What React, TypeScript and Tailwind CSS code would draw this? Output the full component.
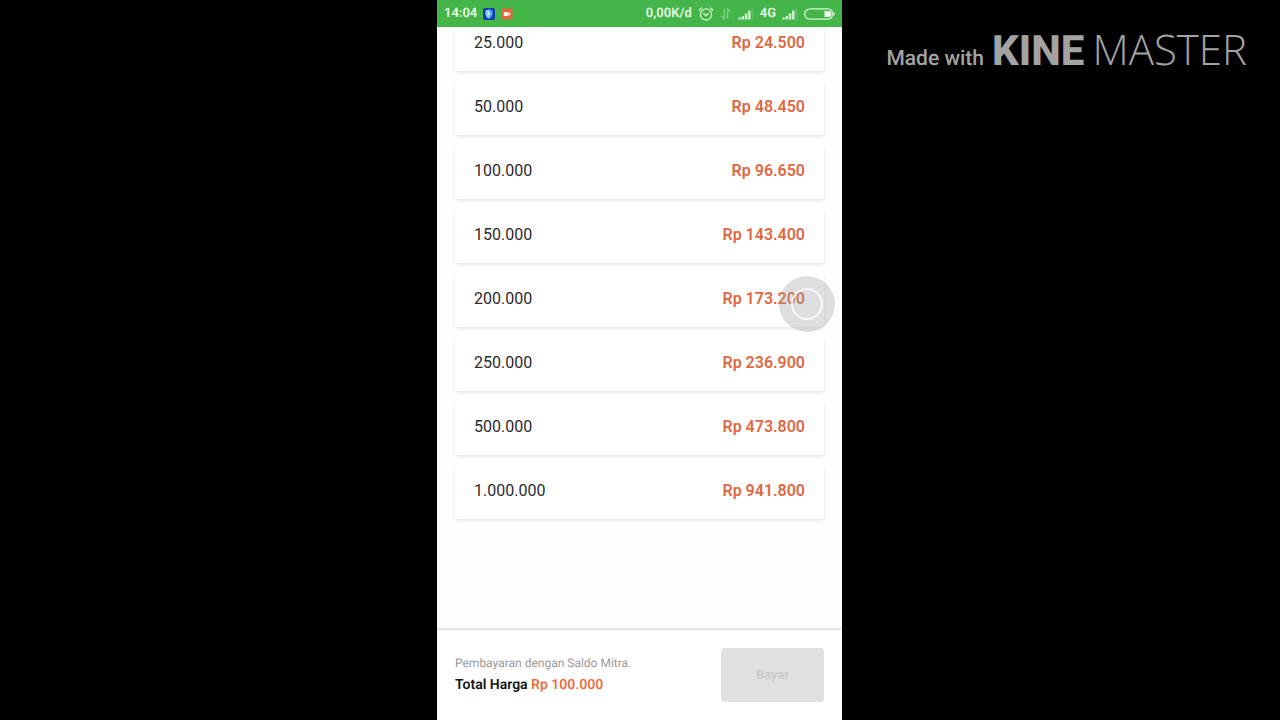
interface Voucher {
  nominal: string
  price: string
}

const vouchers: Voucher[] = [
  { nominal: '25.000', price: 'Rp 24.500' },
  { nominal: '50.000', price: 'Rp 48.450' },
  { nominal: '100.000', price: 'Rp 96.650' },
  { nominal: '150.000', price: 'Rp 143.400' },
  { nominal: '200.000', price: 'Rp 173.200' },
  { nominal: '250.000', price: 'Rp 236.900' },
  { nominal: '500.000', price: 'Rp 473.800' },
  { nominal: '1.000.000', price: 'Rp 941.800' },
]

function ShieldIcon() {
  return (
    <svg width="12" height="12" viewBox="0 0 12 12" aria-hidden="true">
      <rect width="12" height="12" rx="2" fill="#123fae" />
      <path d="M6 1.6 9.4 2.7v2.8c0 2.4-1.4 4-3.4 5-2-1-3.4-2.6-3.4-5V2.7z" fill="#5aa9f5" />
      <path d="M6 1.6v8.9c-2-1-3.4-2.6-3.4-5V2.7z" fill="#8fd0ff" />
      <path d="M6 3.8 7.3 5.4 6 7.4 4.7 5.4z" fill="#e6f6ff" />
    </svg>
  )
}

function RecorderIcon() {
  return (
    <svg width="12" height="12" viewBox="0 0 12 12" aria-hidden="true">
      <rect x="0.5" y="0.5" width="11" height="11" rx="1.5" fill="#e0673c" />
      <rect x="2.8" y="4" width="4.4" height="4" rx="0.6" fill="#fff" />
      <path d="M7.4 5.6 9.2 4.3v3.4L7.4 6.4z" fill="#fff" />
    </svg>
  )
}

function AlarmIcon() {
  return (
    <svg width="16" height="14" viewBox="0 0 16 14" fill="none" stroke="#d3f3d2" strokeWidth="1.3" strokeLinecap="round" aria-hidden="true">
      <circle cx="8" cy="7.4" r="5.6" />
      <path d="M5.6 6.6 8 8.6l2.4-2M1.2 3 3.6 1M14.8 3 12.4 1" />
    </svg>
  )
}

function DataArrowsIcon() {
  return (
    <svg width="12" height="12" viewBox="0 0 12 12" fill="none" stroke="#82d084" strokeWidth="1.4" aria-hidden="true">
      <path d="M4.4 1v10L1.4 8M7.6 11V1l3 3" />
    </svg>
  )
}

function SignalIcon() {
  return (
    <svg width="16" height="12" viewBox="0 0 16 12" fill="#d3f3d2" aria-hidden="true">
      <rect x="0.5" y="9.5" width="2.4" height="2" />
      <rect x="3.7" y="8" width="2.4" height="3.5" />
      <rect x="6.9" y="5.5" width="2.4" height="6" />
      <rect x="10.1" y="2.5" width="2.4" height="9" />
      <rect x="13.3" y="1" width="2" height="10.5" fill="#5cbe5f" />
    </svg>
  )
}

function BatteryIcon() {
  return (
    <svg width="31" height="12" viewBox="0 0 31 12" aria-hidden="true">
      <rect x="0.8" y="0.8" width="28" height="10.4" rx="5.2" fill="none" stroke="#d3f3d2" strokeWidth="1.3" />
      <path d="M20.5 3h4a3 3 0 0 1 3 3 3 3 0 0 1-3 3h-4z" fill="#eefbee" />
      <path d="M30.2 4.4v3.2" stroke="#d3f3d2" strokeWidth="1.2" />
    </svg>
  )
}

function StatusBar() {
  return (
    <header className="flex h-[27px] shrink-0 items-center justify-between bg-[#44b649] px-[7px] pt-px text-[13px] leading-4 font-semibold text-[#e6fae5]">
      <div className="flex items-center gap-[6px]">
        <span>14:04</span>
        <ShieldIcon />
        <RecorderIcon />
      </div>
      <div className="flex items-center gap-[6px]">
        <span>0,00K/d</span>
        <AlarmIcon />
        <DataArrowsIcon />
        <SignalIcon />
        <span>4G</span>
        <SignalIcon />
        <BatteryIcon />
      </div>
    </header>
  )
}

function VoucherCard({ nominal, price }: Voucher) {
  return (
    <li>
      <button
        type="button"
        className="flex h-14 w-full items-center justify-between rounded bg-white px-[19px] text-base text-[#2b2b2b] shadow-[0_2px_4px_rgba(0,0,0,0.09)]"
      >
        <span>{nominal}</span>
        <span className="font-semibold text-[#e0683f]">{price}</span>
      </button>
    </li>
  )
}

function TouchBubble() {
  return (
    <div className="pointer-events-none absolute top-[276px] right-[7px] flex size-14 items-center justify-center rounded-full bg-[#a0a0a0]/35">
      <div className="size-8 rounded-full border-2 border-white/80" />
    </div>
  )
}

function PaymentBar() {
  return (
    <footer className="relative flex shrink-0 items-center justify-between bg-white px-[18px] py-[18px] shadow-[0_-1px_3px_rgba(0,0,0,0.2)]">
      <div>
        <p className="text-xs leading-5 text-[#9a9a9a]">Pembayaran dengan Saldo Mitra.</p>
        <p className="text-sm leading-6 font-semibold text-[#151515]">
          Total Harga <span className="text-[#e8703f]">Rp 100.000</span>
        </p>
      </div>
      <button
        type="button"
        disabled
        className="h-[54px] w-[103px] rounded bg-[#e0e0e0] text-[13px] font-semibold text-[#cacaca]"
      >
        Bayar
      </button>
    </footer>
  )
}

function Watermark() {
  return (
    <div className="flex items-baseline justify-end gap-2 pt-[26px] pr-8 whitespace-nowrap text-[#a3a3a3]">
      <span className="text-[21px] leading-6 font-medium">Made with</span>
      <span className="flex items-baseline gap-2 text-[42px] leading-[48px]">
        <span className="font-extrabold">KINE</span>
        <span className="font-['Open_Sans',sans-serif] font-[350]">MASTER</span>
      </span>
    </div>
  )
}

export default function App() {
  return (
    <div className="flex h-screen overflow-hidden bg-black pr-px font-[Roboto,sans-serif] [text-rendering:geometricPrecision]">
      <div className="flex-1 basis-0" />
      <main className="relative flex aspect-[9/16] h-full shrink-0 flex-col bg-[#fefefe]">
        <StatusBar />
        <div className="min-h-0 flex-1 overflow-hidden">
          <ul className="-mt-3 flex flex-col gap-2 px-[18px]">
            {vouchers.map((voucher) => (
              <VoucherCard key={voucher.nominal} {...voucher} />
            ))}
          </ul>
        </div>
        <PaymentBar />
        <TouchBubble />
      </main>
      <aside className="min-w-0 flex-1 basis-0">
        <Watermark />
      </aside>
    </div>
  )
}
